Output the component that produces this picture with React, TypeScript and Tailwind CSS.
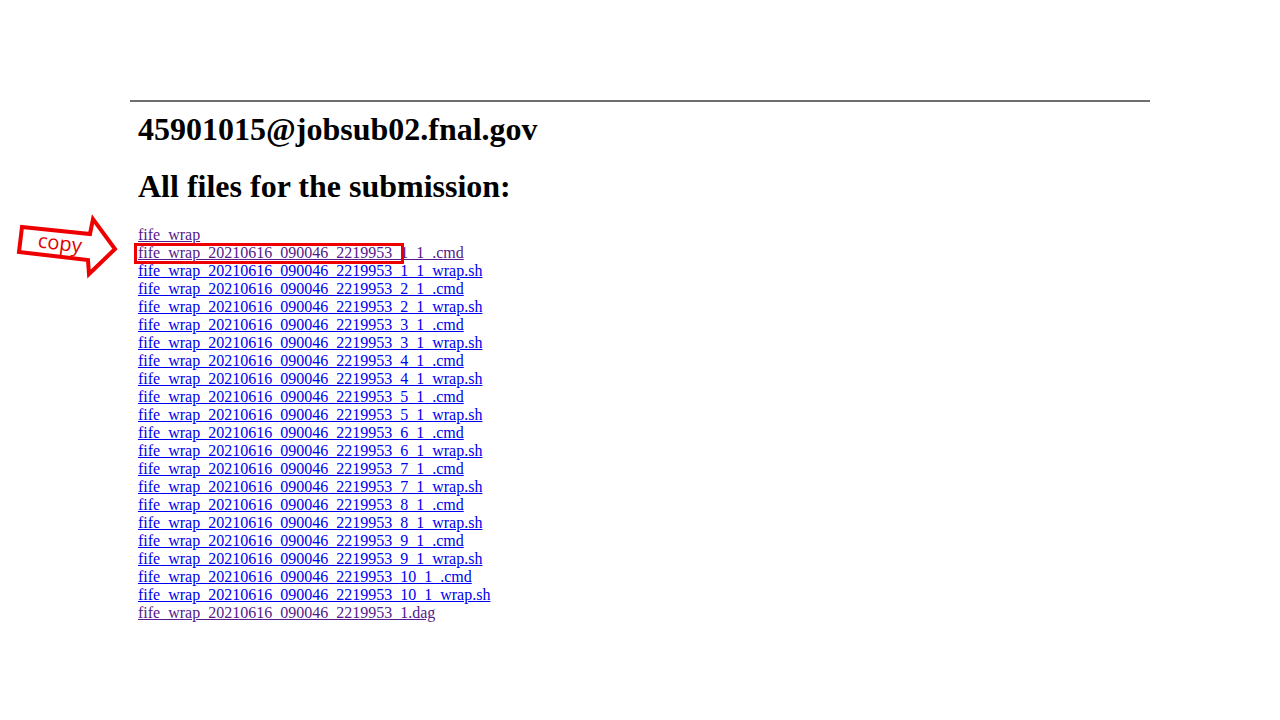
import React from 'react';

const files: { name: string; visited?: boolean }[] = [
  { name: 'fife_wrap', visited: true },
  { name: 'fife_wrap_20210616_090046_2219953_1_1_.cmd', visited: true },
  { name: 'fife_wrap_20210616_090046_2219953_1_1_wrap.sh' },
  { name: 'fife_wrap_20210616_090046_2219953_2_1_.cmd' },
  { name: 'fife_wrap_20210616_090046_2219953_2_1_wrap.sh' },
  { name: 'fife_wrap_20210616_090046_2219953_3_1_.cmd' },
  { name: 'fife_wrap_20210616_090046_2219953_3_1_wrap.sh' },
  { name: 'fife_wrap_20210616_090046_2219953_4_1_.cmd' },
  { name: 'fife_wrap_20210616_090046_2219953_4_1_wrap.sh' },
  { name: 'fife_wrap_20210616_090046_2219953_5_1_.cmd' },
  { name: 'fife_wrap_20210616_090046_2219953_5_1_wrap.sh' },
  { name: 'fife_wrap_20210616_090046_2219953_6_1_.cmd' },
  { name: 'fife_wrap_20210616_090046_2219953_6_1_wrap.sh' },
  { name: 'fife_wrap_20210616_090046_2219953_7_1_.cmd' },
  { name: 'fife_wrap_20210616_090046_2219953_7_1_wrap.sh' },
  { name: 'fife_wrap_20210616_090046_2219953_8_1_.cmd' },
  { name: 'fife_wrap_20210616_090046_2219953_8_1_wrap.sh' },
  { name: 'fife_wrap_20210616_090046_2219953_9_1_.cmd' },
  { name: 'fife_wrap_20210616_090046_2219953_9_1_wrap.sh' },
  { name: 'fife_wrap_20210616_090046_2219953_10_1_.cmd' },
  { name: 'fife_wrap_20210616_090046_2219953_10_1_wrap.sh' },
  { name: 'fife_wrap_20210616_090046_2219953_1.dag', visited: true },
];

// hand-drawn "copy" callout arrow, sits over the page
const CopyArrow = () => (
  <div className="absolute left-[14px] top-[214px] w-[110px] h-[66px]">
    <svg width="110" height="66" viewBox="0 0 110 66" className="absolute inset-0">
      <polygon
        points="8,13 76,20 79,5 101,35 75,60 74,46 5,38"
        fill="white"
        stroke="#ee0000"
        strokeWidth="4"
        strokeLinejoin="miter"
      />
    </svg>
    <span className="absolute left-[24px] top-[17px] rotate-[7deg] text-[20px] leading-[24px] text-[#e00000] font-['Open_Sans',sans-serif]">
      copy
    </span>
  </div>
);

export default function App() {
  return (
    <div className="relative w-[1280px] h-[720px] bg-white overflow-hidden">
      <div className="pt-[100px] pl-[130px] w-[1150px]">
        <div className="h-[2px] bg-[#6e6e6e]" />
        <div className="pl-[8px] font-['Liberation_Serif','Times_New_Roman',serif] text-black">
          <h1 className="mt-[9px] text-[32px] leading-[37px] font-bold">45901015@jobsub02.fnal.gov</h1>
          <h2 className="mt-[20px] text-[32px] leading-[37px] font-bold">All files for the submission:</h2>
          <div className="mt-[21px] flex flex-col items-start">
            {files.map((f) => (
              <a
                key={f.name}
                href="#"
                className={`text-[16px] leading-[18px] underline ${
                  f.visited ? 'text-[#551a8b]' : 'text-[#0000ee]'
                }`}
              >
                {f.name}
              </a>
            ))}
          </div>
        </div>
      </div>

      <div className="absolute left-[134px] top-[243px] w-[270px] h-[21px] border-[3px] border-[#ee0000]" />
      <CopyArrow />
    </div>
  );
}
